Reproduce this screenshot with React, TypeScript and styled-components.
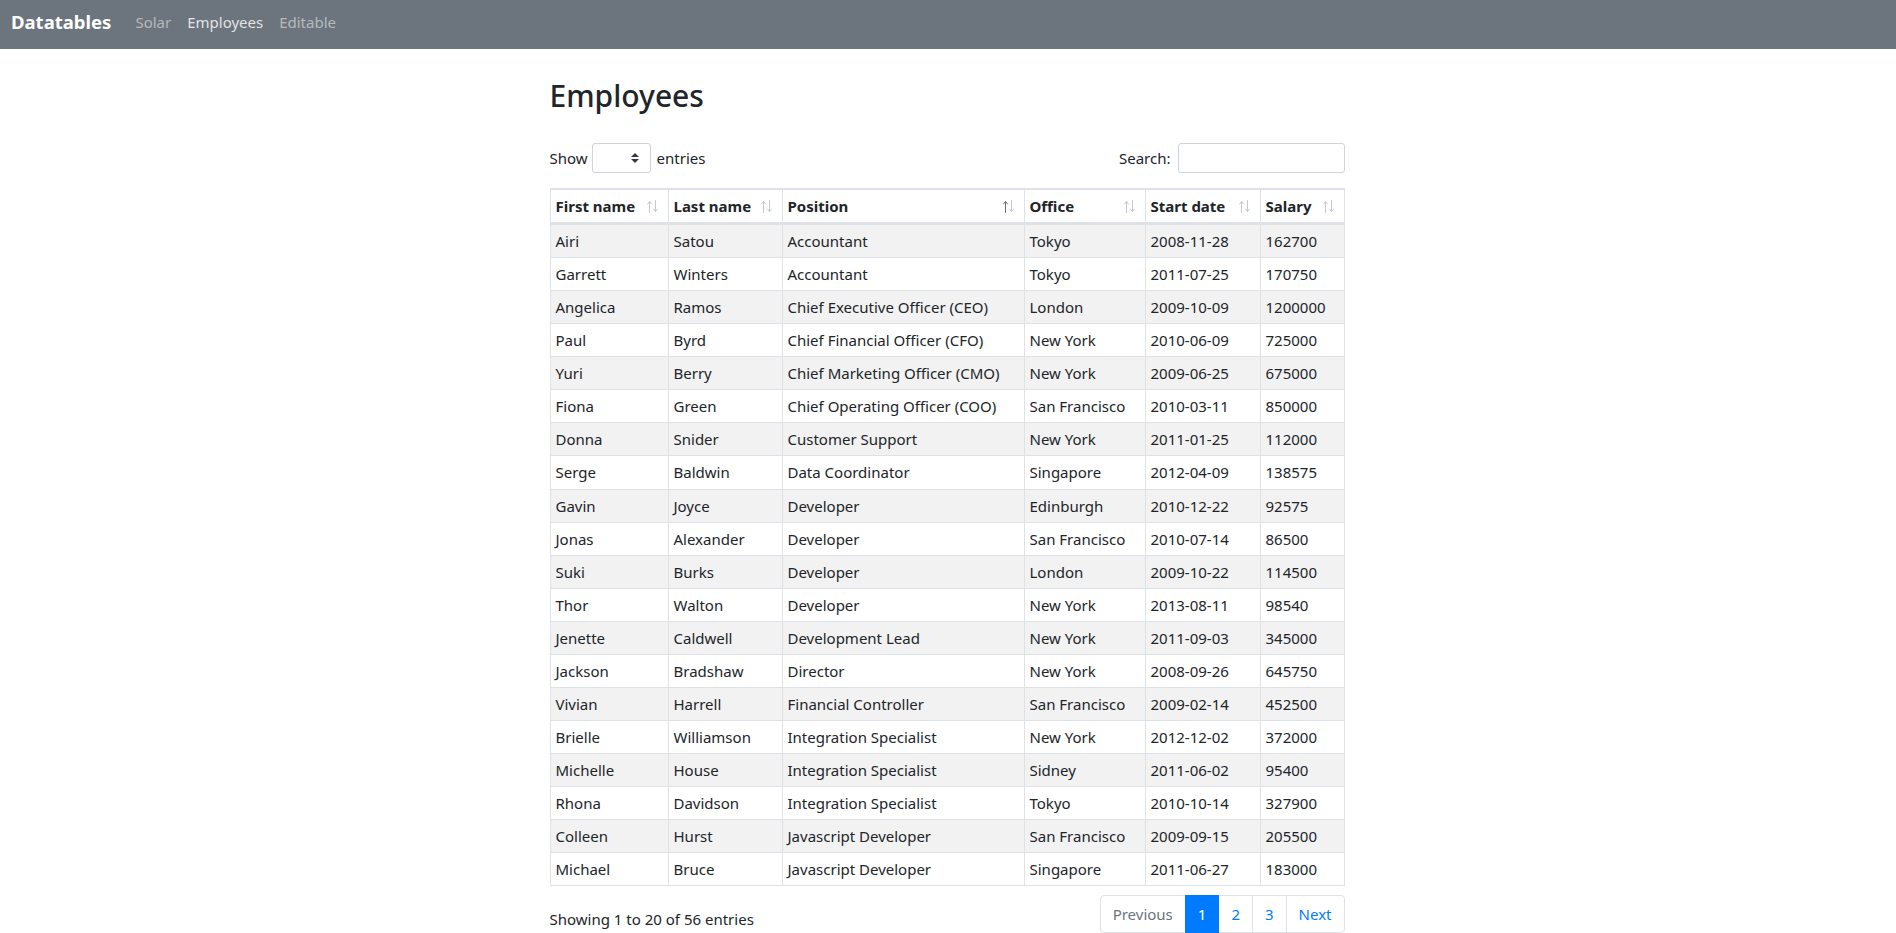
import React from "react";
import styled, { createGlobalStyle } from "styled-components";

const GlobalStyle = createGlobalStyle`
  *, *::before, *::after { box-sizing: border-box; }
  html, body { margin: 0; padding: 0; overflow: hidden; }
  body {
    font-family: "Noto Sans", "Open Sans", sans-serif;
    font-size: 15px;
    line-height: 24px;
    color: #212529;
    background: #fff;
  }
`;

const Navbar = styled.nav`
  height: 49px;
  background: #6c757d;
  display: flex;
  align-items: flex-start;
  padding: 7px 11px 0;
`;

const Brand = styled.a`
  font-size: 18.5px;
  font-weight: 700;
  color: #fff;
  margin-right: 16px;
  text-decoration: none;
  line-height: 30px;
`;

const NavList = styled.div`
  display: flex;
  align-items: center;
  height: 30px;
`;

const NavLink = styled.a<{ $active?: boolean }>`
  padding: 0 8px;
  font-size: 15px;
  color: ${(p) => (p.$active ? "rgba(255,255,255,0.82)" : "rgba(255,255,255,0.5)")};
  text-decoration: none;
`;

const Main = styled.main`
  width: 795px;
  margin: 0 auto;
  position: relative;
  left: -1px;
`;

const Title = styled.h2`
  font-size: 30px;
  font-weight: 500;
  line-height: 36px;
  margin: 29px 0 29px;
`;

const Controls = styled.div`
  display: flex;
  justify-content: space-between;
  align-items: center;
  height: 30px;
`;

const Label = styled.label`
  display: flex;
  align-items: center;
  font-size: 15px;
`;

const SelectBox = styled.div`
  width: 59px;
  height: 30px;
  margin: 0 6px 0 4px;
  border: 1px solid #ced4da;
  border-radius: 3px;
  display: flex;
  align-items: center;
  justify-content: flex-end;
  padding-right: 11px;
`;

const SearchInput = styled.input`
  width: 167px;
  height: 30px;
  margin-left: 7px;
  border: 1px solid #ced4da;
  border-radius: 3px;
  outline: none;
  font: inherit;
`;

const Table = styled.table`
  width: 795px;
  margin-top: 15px;
  border-collapse: separate;
  border-spacing: 0;
  table-layout: fixed;
  border-left: 1px solid #dee2e6;
  border-bottom: 1px solid #dee2e6;
`;

const Col = styled.col<{ $w: number }>`
  width: ${(p) => p.$w}px;
`;

const Th = styled.th`
  text-align: left;
  font-weight: 700;
  font-size: 15px;
  padding: 4px 10px 4px 5px;
  border-top: 2px solid #dee2e6;
  border-right: 1px solid #dee2e6;
  border-bottom: 2px solid #dee2e6;
  white-space: nowrap;
  vertical-align: middle;
`;

const HeadInner = styled.div`
  display: flex;
  align-items: center;
  justify-content: space-between;
  height: 24px;
`;

const Row = styled.tr`
  &:nth-child(odd) td {
    background: rgba(0, 0, 0, 0.05);
  }
`;

const Td = styled.td`
  padding: 4px 5px;
  height: 33.07px;
  border-top: 1px solid #dee2e6;
  border-right: 1px solid #dee2e6;
  white-space: nowrap;
  overflow: hidden;
`;

const Footer = styled.div`
  display: flex;
  justify-content: space-between;
  align-items: flex-start;
  margin-top: 9px;
`;

const Info = styled.div`
  padding-top: 12px;
  font-size: 15px;
`;

const Pagination = styled.ul`
  display: flex;
  list-style: none;
  margin: 0;
  padding: 0;
`;

const PageLink = styled.li<{ $active?: boolean; $disabled?: boolean }>`
  height: 38px;
  padding: 0 12px;
  margin-left: -1px;
  display: flex;
  align-items: center;
  font-size: 15px;
  border: 1px solid ${(p) => (p.$active ? "#007bff" : "#dee2e6")};
  background: ${(p) => (p.$active ? "#007bff" : "#fff")};
  color: ${(p) => (p.$active ? "#fff" : p.$disabled ? "#6c757d" : "#007bff")};
  position: relative;
  z-index: ${(p) => (p.$active ? 1 : 0)};
  &:first-child {
    margin-left: 0;
    border-radius: 4px 0 0 4px;
  }
  &:last-child {
    border-radius: 0 4px 4px 0;
  }
`;

const SortIcon = ({ dir }: { dir?: "asc" }) => (
  <svg width="11" height="13" viewBox="0 0 11 13" style={{ flex: "none" }}>
    <g fill="none" strokeWidth="1" strokeLinecap="round" strokeLinejoin="round">
      <g stroke={dir === "asc" ? "#6b6f73" : "#c8c9cb"}>
        <line x1="2.5" y1="1.5" x2="2.5" y2="12.5" />
        <polyline points="0.5,4 2.5,1.5 4.5,4" />
      </g>
      <g stroke="#c8c9cb">
        <line x1="8.5" y1="0.5" x2="8.5" y2="11.5" />
        <polyline points="6.5,9 8.5,11.5 10.5,9" />
      </g>
    </g>
  </svg>
);

const Caret = () => (
  <svg width="8" height="10" viewBox="0 0 4 5">
    <path fill="#343a40" d="M2 0L0 2h4zm0 5L0 3h4z" />
  </svg>
);

const columns: { title: string; w: number; dir?: "asc" }[] = [
  { title: "First name", w: 118 },
  { title: "Last name", w: 114 },
  { title: "Position", w: 242, dir: "asc" },
  { title: "Office", w: 121 },
  { title: "Start date", w: 115 },
  { title: "Salary", w: 84 },
];

const rows: string[][] = [
  ["Airi", "Satou", "Accountant", "Tokyo", "2008-11-28", "162700"],
  ["Garrett", "Winters", "Accountant", "Tokyo", "2011-07-25", "170750"],
  ["Angelica", "Ramos", "Chief Executive Officer (CEO)", "London", "2009-10-09", "1200000"],
  ["Paul", "Byrd", "Chief Financial Officer (CFO)", "New York", "2010-06-09", "725000"],
  ["Yuri", "Berry", "Chief Marketing Officer (CMO)", "New York", "2009-06-25", "675000"],
  ["Fiona", "Green", "Chief Operating Officer (COO)", "San Francisco", "2010-03-11", "850000"],
  ["Donna", "Snider", "Customer Support", "New York", "2011-01-25", "112000"],
  ["Serge", "Baldwin", "Data Coordinator", "Singapore", "2012-04-09", "138575"],
  ["Gavin", "Joyce", "Developer", "Edinburgh", "2010-12-22", "92575"],
  ["Jonas", "Alexander", "Developer", "San Francisco", "2010-07-14", "86500"],
  ["Suki", "Burks", "Developer", "London", "2009-10-22", "114500"],
  ["Thor", "Walton", "Developer", "New York", "2013-08-11", "98540"],
  ["Jenette", "Caldwell", "Development Lead", "New York", "2011-09-03", "345000"],
  ["Jackson", "Bradshaw", "Director", "New York", "2008-09-26", "645750"],
  ["Vivian", "Harrell", "Financial Controller", "San Francisco", "2009-02-14", "452500"],
  ["Brielle", "Williamson", "Integration Specialist", "New York", "2012-12-02", "372000"],
  ["Michelle", "House", "Integration Specialist", "Sidney", "2011-06-02", "95400"],
  ["Rhona", "Davidson", "Integration Specialist", "Tokyo", "2010-10-14", "327900"],
  ["Colleen", "Hurst", "Javascript Developer", "San Francisco", "2009-09-15", "205500"],
  ["Michael", "Bruce", "Javascript Developer", "Singapore", "2011-06-27", "183000"],
];

export default function App() {
  return (
    <>
      <GlobalStyle />
      <Navbar>
        <Brand href="#">Datatables</Brand>
        <NavList>
          <NavLink href="#">Solar</NavLink>
          <NavLink href="#" $active>
            Employees
          </NavLink>
          <NavLink href="#">Editable</NavLink>
        </NavList>
      </Navbar>
      <Main>
        <Title>Employees</Title>
        <Controls>
          <Label>
            Show
            <SelectBox>
              <Caret />
            </SelectBox>
            entries
          </Label>
          <Label>
            Search:
            <SearchInput type="search" />
          </Label>
        </Controls>
        <Table>
          <colgroup>
            {columns.map((c) => (
              <Col key={c.title} $w={c.w} />
            ))}
          </colgroup>
          <thead>
            <tr>
              {columns.map((c) => (
                <Th key={c.title}>
                  <HeadInner>
                    <span>{c.title}</span>
                    <SortIcon dir={c.dir} />
                  </HeadInner>
                </Th>
              ))}
            </tr>
          </thead>
          <tbody>
            {rows.map((r) => (
              <Row key={r[0] + r[1]}>
                {r.map((v, i) => (
                  <Td key={i}>{v}</Td>
                ))}
              </Row>
            ))}
          </tbody>
        </Table>
        <Footer>
          <Info>Showing 1 to 20 of 56 entries</Info>
          <Pagination>
            <PageLink $disabled>Previous</PageLink>
            <PageLink $active>1</PageLink>
            <PageLink>2</PageLink>
            <PageLink>3</PageLink>
            <PageLink>Next</PageLink>
          </Pagination>
        </Footer>
      </Main>
    </>
  );
}
